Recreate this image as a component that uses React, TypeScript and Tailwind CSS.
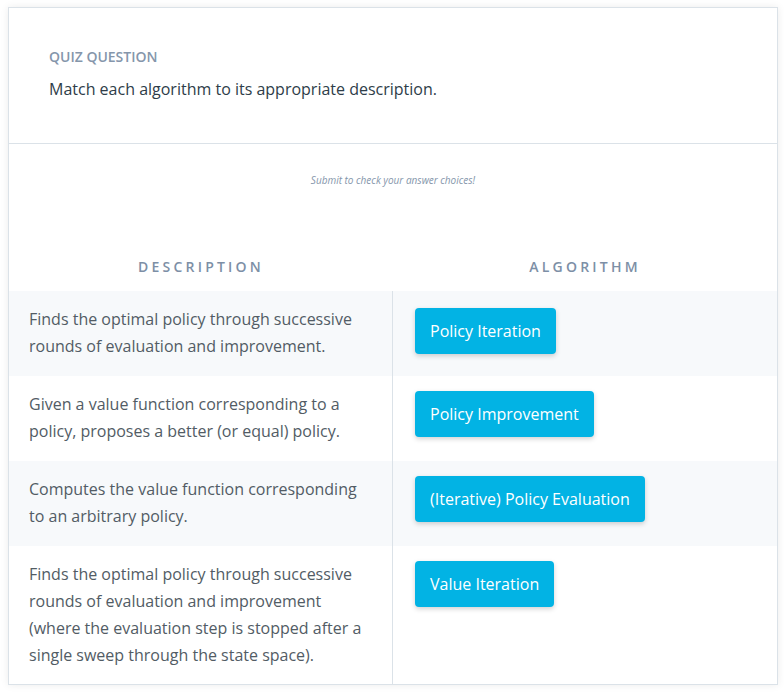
import React from 'react';

type Pair = {
  description: string;
  algorithm: string;
};

const pairs: Pair[] = [
  {
    description: 'Finds the optimal policy through successive rounds of evaluation and improvement.',
    algorithm: 'Policy Iteration',
  },
  {
    description: 'Given a value function corresponding to a policy, proposes a better (or equal) policy.',
    algorithm: 'Policy Improvement',
  },
  {
    description: 'Computes the value function corresponding to an arbitrary policy.',
    algorithm: '(Iterative) Policy Evaluation',
  },
  {
    description:
      'Finds the optimal policy through successive rounds of evaluation and improvement (where the evaluation step is stopped after a single sweep through the state space).',
    algorithm: 'Value Iteration',
  },
];

export default function App() {
  return (
    <div className="min-h-[692px] bg-white pt-[7px] pl-2 font-['Open_Sans',sans-serif]">
      <div className="w-[770px] border border-[#dbe2e8] bg-white shadow-[0_0_8px_rgba(0,0,0,0.08)]">
        {/* question */}
        <div className="border-b border-[#dbe2e8] px-10 pt-[39px] pb-[42px]">
          <p className="text-[14px] font-semibold uppercase leading-5 text-[#8596ab]">Quiz Question</p>
          <p className="mt-[10px] text-[16px] leading-6 text-[#2e3d49]">
            Match each algorithm to its appropriate description.
          </p>
        </div>

        <p className="pt-[28px] text-center text-[10px] italic leading-4 text-[#8596ab]">
          Submit to check your answer choices!
        </p>

        {/* table */}
        <div className="mt-[54px] grid grid-cols-2">
          <div className="pb-[14px] pt-[15px] text-center text-[14px] font-semibold uppercase leading-5 tracking-[0.23em] text-[#7d8fa6]">
            Description
          </div>
          <div className="pb-[14px] pt-[15px] text-center text-[14px] font-semibold uppercase leading-5 tracking-[0.23em] text-[#7d8fa6]">
            Algorithm
          </div>
          {pairs.map((p, i) => (
            <React.Fragment key={p.algorithm}>
              <div
                className={`min-h-[85px] border-r border-[#dbe2e8] py-[15px] pl-5 pr-[19px] text-[16px] leading-[27px] text-[#525c65] ${
                  i % 2 === 0 ? 'bg-[#f7f9fb]' : 'bg-white'
                }`}
              >
                {p.description}
              </div>
              <div
                className={`pl-[22px] ${i === 0 ? 'pt-[17px]' : 'pt-[15px]'} ${
                  i % 2 === 0 ? 'bg-[#f7f9fb]' : 'bg-white'
                }`}
              >
                <span className="inline-block rounded-[4px] bg-[#02b3e4] px-[15px] text-[16px] leading-[46px] text-white shadow-[0_2px_5px_rgba(0,0,0,0.18)]">
                  {p.algorithm}
                </span>
              </div>
            </React.Fragment>
          ))}
        </div>
      </div>
    </div>
  );
}
